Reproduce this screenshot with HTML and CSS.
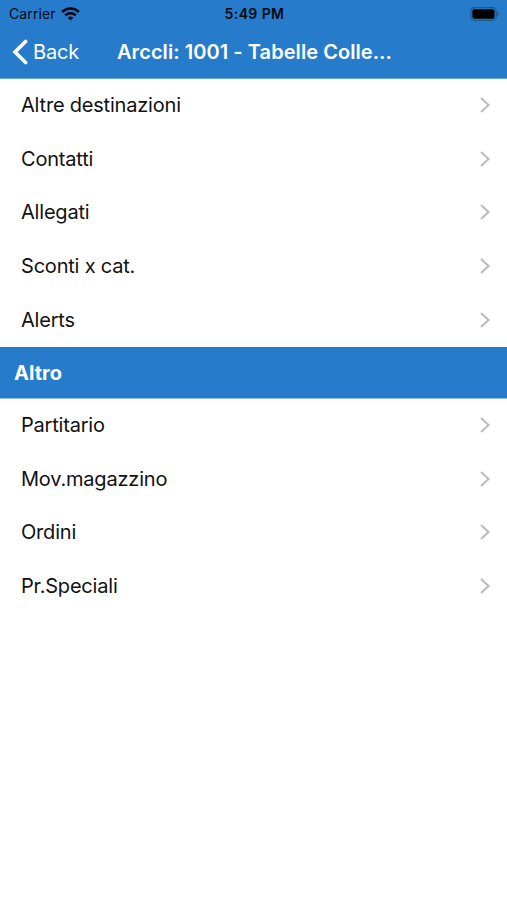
FILE: index.html
```html
<!DOCTYPE html>
<html lang="it">
<head>
  <meta charset="utf-8">
  <title>Tabelle Collegate</title>
  <link rel="stylesheet" href="styles.css">
</head>
<body>
  <header class="header">
    <div class="status">
      <div class="carrier">
        <span>Carrier</span>
        <svg class="wifi" width="19" height="14" viewBox="0 0 19 14" fill="none" stroke="#000814" stroke-width="2.6">
          <path d="M1.1 5C5.8 .4 13.2 .4 17.9 5"/>
          <path d="M4.2 8.3C7.2 5.4 11.8 5.4 14.8 8.3"/>
          <path d="M6.7 10.7Q9.5 8.5 12.3 10.7L9.5 13.5Z" fill="#000814" stroke="none"/>
        </svg>
      </div>
      <span class="time">5:49 PM</span>
      <svg class="battery" width="30" height="14" viewBox="0 0 30 14">
        <rect x=".7" y=".7" width="25.6" height="12.6" rx="3.8" fill="none" stroke="#1a5890" stroke-width="1.2"/>
        <rect x="2.4" y="2.2" width="22.2" height="9.6" rx="2" fill="#000"/>
        <path d="M27.6 4.8Q30.6 7 27.6 9.2Z" fill="#1a5890"/>
      </svg>
    </div>
    <nav class="navbar">
      <a class="back">
        <svg width="16" height="26" viewBox="0 0 16 26" fill="none" stroke="#fff" stroke-width="3.6" stroke-linecap="round" stroke-linejoin="miter">
          <path d="M13.6 2.4L3 13L13.6 23.6"/>
        </svg>
        <span>Back</span>
      </a>
      <h1>Arccli: 1001 - Tabelle Colle...</h1>
    </nav>
  </header>

  <svg class="defs">
    <symbol id="chevron" viewBox="0 0 12 18">
      <path d="M2 2L9.5 9L2 16" fill="none" stroke="#bdbdbf" stroke-width="2.2"/>
    </symbol>
  </svg>

  <ul class="list">
    <li><span>Altre destinazioni</span><svg class="chevron"><use href="#chevron"/></svg></li>
    <li><span>Contatti</span><svg class="chevron"><use href="#chevron"/></svg></li>
    <li><span>Allegati</span><svg class="chevron"><use href="#chevron"/></svg></li>
    <li><span>Sconti x cat.</span><svg class="chevron"><use href="#chevron"/></svg></li>
    <li><span>Alerts</span><svg class="chevron"><use href="#chevron"/></svg></li>
  </ul>
  <h2 class="section">Altro</h2>
  <ul class="list">
    <li><span>Partitario</span><svg class="chevron"><use href="#chevron"/></svg></li>
    <li><span>Mov.magazzino</span><svg class="chevron"><use href="#chevron"/></svg></li>
    <li><span>Ordini</span><svg class="chevron"><use href="#chevron"/></svg></li>
    <li><span>Pr.Speciali</span><svg class="chevron"><use href="#chevron"/></svg></li>
  </ul>
</body>
</html>
```

FILE: styles.css
```css
* { box-sizing: border-box; }
body { margin: 0; min-height: 900px; background: #fff; color: #111; font-family: Inter, sans-serif; font-size: 20px; letter-spacing: -0.2px; }
h1, h2, ul { margin: 0; padding: 0; }
svg { display: block; flex: none; }
.defs { display: none; }

.header { height: 79px; background: #267ccb; border-bottom: 1px solid #64a6df; }
.status { display: grid; grid-template-columns: 1fr auto 1fr; align-items: center; height: 26px; padding: 1px 7px 0 9px; color: #000814; font-size: 14px; letter-spacing: 0.1px; }
.carrier { display: flex; align-items: center; gap: 5px; }
.time { font-weight: 600; letter-spacing: 0.4px; }
.battery { justify-self: end; }

.navbar { display: flex; align-items: center; height: 52px; padding-left: 12px; color: #fff; }
.back { display: flex; align-items: center; gap: 5px; width: 105px; }
h1 { font-size: 20px; font-weight: 600; letter-spacing: 0.06px; white-space: nowrap; }

.list { list-style: none; }
.list li { display: flex; align-items: center; justify-content: space-between; height: 53.8px; padding: 0 16px 2px 21px; }
.chevron { width: 12px; height: 18px; }
.section { height: 52px; margin-top: -1px; padding-left: 14px; background: #267ccb; border-bottom: 1px solid #8fc1ec; color: #fff; font-size: 20px; font-weight: 700; letter-spacing: 0; line-height: 52px; }
```
